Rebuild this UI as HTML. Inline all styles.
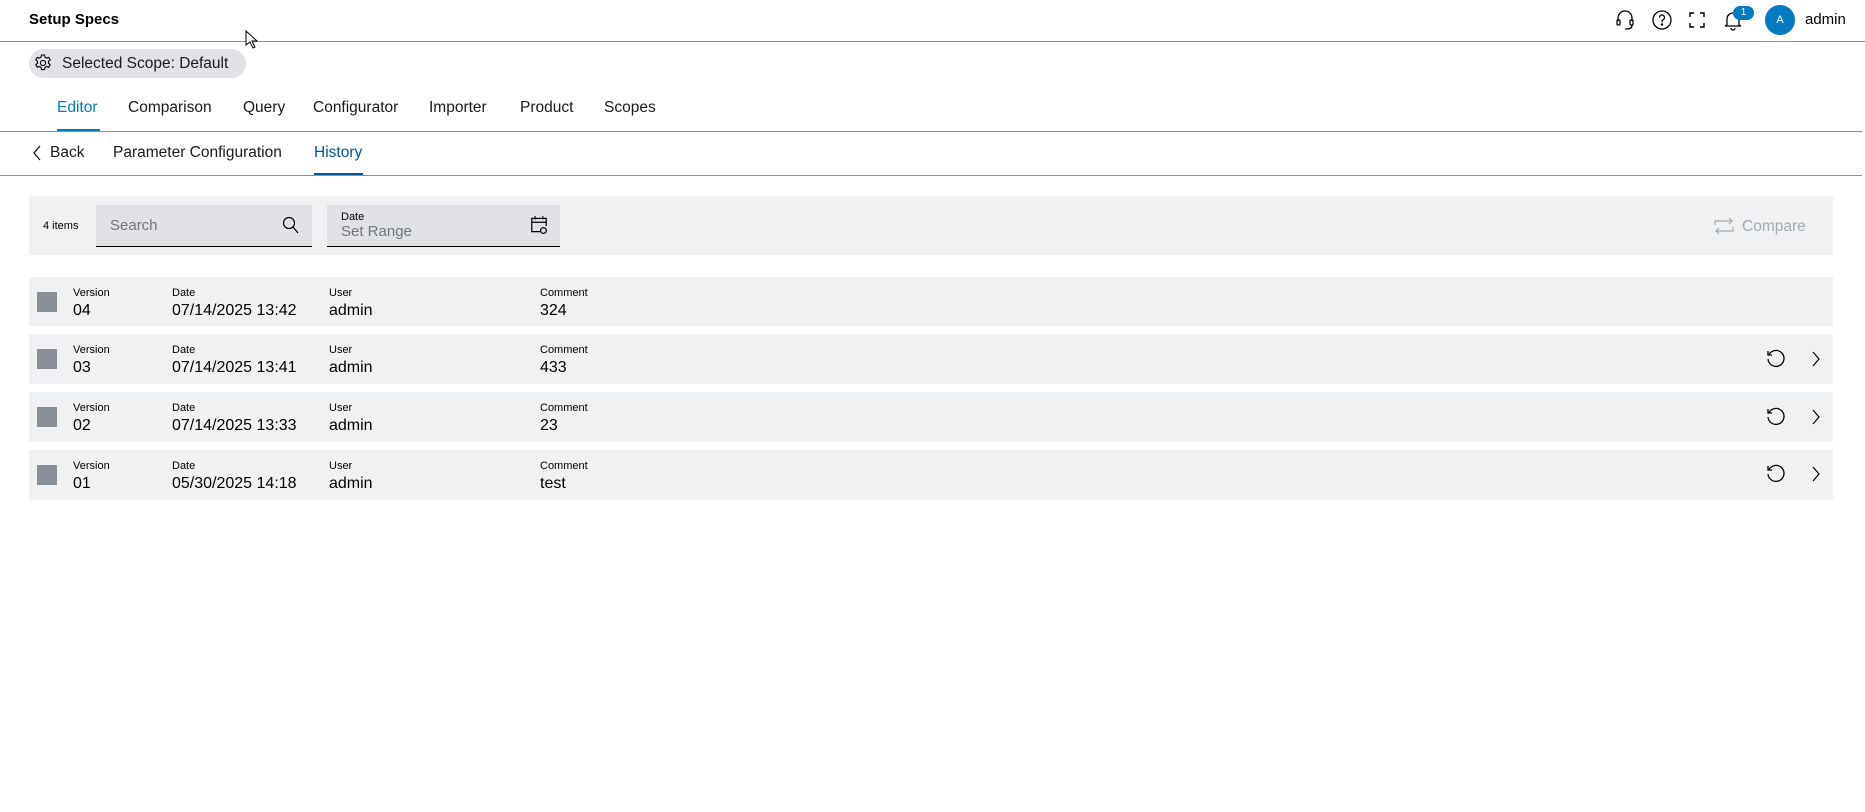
<!DOCTYPE html>
<html><head><meta charset="utf-8"><style>
*{margin:0;padding:0;box-sizing:border-box}
body{width:1865px;height:812px;background:#fff;font-family:"Liberation Sans",sans-serif;color:#000;position:relative;overflow:hidden}
.a{position:absolute;white-space:nowrap}
.line{position:absolute;left:0;height:1px;background:#8a9097}
.tab{position:absolute;top:99px;font-size:15.5px;color:#1a1a1a;white-space:nowrap}
.sub{position:absolute;top:144px;font-size:15.5px;color:#1a1a1a;white-space:nowrap}
.row{position:absolute;left:29px;width:1804px;height:50px;background:#eff1f2}
.cb{position:absolute;left:8px;top:15px;width:20px;height:20px;background:#8a9097}
.lab{position:absolute;top:10px;font-size:11px;color:#000;white-space:nowrap}
.val{position:absolute;top:25px;font-size:16px;color:#000;white-space:nowrap}
svg{position:absolute}
</style></head><body>
<div class="a" style="left:29px;top:11px;font-size:15px;font-weight:bold">Setup Specs</div>
<svg style="left:1614px;top:9px" width="22" height="22" viewBox="0 0 22 22" fill="none" stroke="#000" stroke-width="1.3"><path d="M4 12V9a7 7 0 0 1 14 0v3"/><rect x="3" y="11" width="3" height="5" rx="1"/><rect x="16" y="11" width="3" height="5" rx="1"/><path d="M18 16q0 4-5 4h-2"/></svg>
<svg style="left:1651px;top:9px" width="22" height="22" viewBox="0 0 22 22" fill="none" stroke="#000" stroke-width="1.3"><circle cx="11" cy="11" r="9"/><path d="M8.5 8.5a2.5 2.5 0 1 1 3.5 2.3c-.8.4-1 1-1 1.7v.8"/><circle cx="11" cy="15.5" r=".6" fill="#000"/></svg>
<svg style="left:1687px;top:10px" width="20" height="20" viewBox="0 0 20 20" fill="none" stroke="#000" stroke-width="1.4"><path d="M3 7V3h4M13 3h4v4M17 13v4h-4M7 17H3v-4"/></svg>
<svg style="left:1722px;top:9px" width="22" height="22" viewBox="0 0 22 22" fill="none" stroke="#000" stroke-width="1.3"><path d="M5 16V10a6 6 0 0 1 12 0v6l2 1H3z"/><path d="M9 19a2 2 0 0 0 4 0"/></svg>
<div class="a" style="left:1733px;top:6px;width:21px;height:14px;border-radius:7px;background:#007bc0;color:#fff;font-size:10px;text-align:center;line-height:14px">1</div>
<div class="a" style="left:1765px;top:5px;width:30px;height:30px;border-radius:50%;background:#007bc0;color:#fff;font-size:11px;text-align:center;line-height:30px">A</div>
<div class="a" style="left:1805px;top:11px;font-size:15px">admin</div>
<div class="line" style="top:41px;width:1865px"></div>
<div class="a" style="left:29px;top:49px;width:217px;height:29px;border-radius:15px;background:#e0e2e5"></div>
<svg style="left:33px;top:53px" width="20" height="20" viewBox="0 0 20 20" fill="none" stroke="#000" stroke-width="1.1"><path d="M8.5 2h3l.5 2.2 1.6.9 2.1-.8 1.5 2.6-1.7 1.5v1.8l1.7 1.5-1.5 2.6-2.1-.8-1.6.9-.5 2.2h-3l-.5-2.2-1.6-.9-2.1.8-1.5-2.6 1.7-1.5V8.4L2.8 6.9l1.5-2.6 2.1.8L8 4.2z"/><circle cx="10" cy="10" r="2.6"/></svg>
<div class="a" style="left:62px;top:55px;font-size:15.5px;color:#1a1a1a">Selected Scope: Default</div>
<div class="tab" style="left:57px;color:#007bc0">Editor</div>
<div class="a" style="left:57px;top:129px;width:43px;height:2px;background:#007bc0"></div>
<div class="tab" style="left:128px">Comparison</div>
<div class="tab" style="left:243px">Query</div>
<div class="tab" style="left:313px">Configurator</div>
<div class="tab" style="left:429px">Importer</div>
<div class="tab" style="left:520px">Product</div>
<div class="tab" style="left:604px">Scopes</div>
<div class="line" style="top:131px;width:1862px"></div>
<svg style="left:32px;top:145px" width="10" height="16" viewBox="0 0 10 16" fill="none" stroke="#000" stroke-width="1.2"><path d="M8 1L2 8l6 7"/></svg>
<div class="sub" style="left:50px">Back</div>
<div class="sub" style="left:113px">Parameter Configuration</div>
<div class="sub" style="left:314px;color:#005691">History</div>
<div class="a" style="left:314px;top:173px;width:49px;height:2px;background:#005691"></div>
<div class="line" style="top:175px;width:1862px"></div>
<div class="a" style="left:29px;top:196px;width:1804px;height:59px;background:#eff1f2"></div>
<div class="a" style="left:43px;top:220px;font-size:11px">4 items</div>
<div class="a" style="left:96px;top:205px;width:216px;height:42px;background:#e0e2e5;border-bottom:1px solid #000"></div>
<div class="a" style="left:110px;top:217px;font-size:15px;color:#71767c">Search</div>
<svg style="left:282px;top:216px" width="18" height="20" viewBox="0 0 18 20" fill="none" stroke="#000" stroke-width="1.2"><circle cx="7" cy="7" r="5.5"/><path d="M11 11l5 6"/></svg>
<div class="a" style="left:327px;top:205px;width:233px;height:42px;background:#e0e2e5;border-bottom:1px solid #000"></div>
<div class="a" style="left:341px;top:211px;font-size:11px">Date</div>
<div class="a" style="left:341px;top:223px;font-size:15px;color:#71767c">Set Range</div>
<svg style="left:530px;top:215px" width="18" height="20" viewBox="0 0 16 18" fill="none" stroke="#000" stroke-width="1.1"><path d="M9 15H1.5V3h13v7"/><path d="M1.5 6.5h13M4.5 1v3M11.5 1v3"/><circle cx="12" cy="14" r="2.6"/></svg>
<svg style="left:1713px;top:217px" width="22" height="18" viewBox="0 0 20 18" fill="none" stroke="#a4abb3" stroke-width="1.2"><path d="M1 8V4h17M15 1l3 3-3 3M19 10v4H2M5 17l-3-3 3-3"/></svg>
<div class="a" style="left:1742px;top:218px;font-size:15.5px;color:#a4abb3">Compare</div>
<div class="row" style="top:277px;height:49px">
 <div class="cb"></div>
 <div class="lab" style="left:44px">Version</div><div class="val" style="left:44px">04</div>
 <div class="lab" style="left:143px">Date</div><div class="val" style="left:143px">07/14/2025 13:42</div>
 <div class="lab" style="left:300px">User</div><div class="val" style="left:300px">admin</div>
 <div class="lab" style="left:511px">Comment</div><div class="val" style="left:511px">324</div>
</div>
<div class="row" style="top:334px">
 <div class="cb"></div>
 <div class="lab" style="left:44px">Version</div><div class="val" style="left:44px">03</div>
 <div class="lab" style="left:143px">Date</div><div class="val" style="left:143px">07/14/2025 13:41</div>
 <div class="lab" style="left:300px">User</div><div class="val" style="left:300px">admin</div>
 <div class="lab" style="left:511px">Comment</div><div class="val" style="left:511px">433</div>
</div>
<div class="row" style="top:392px">
 <div class="cb"></div>
 <div class="lab" style="left:44px">Version</div><div class="val" style="left:44px">02</div>
 <div class="lab" style="left:143px">Date</div><div class="val" style="left:143px">07/14/2025 13:33</div>
 <div class="lab" style="left:300px">User</div><div class="val" style="left:300px">admin</div>
 <div class="lab" style="left:511px">Comment</div><div class="val" style="left:511px">23</div>
</div>
<div class="row" style="top:450px">
 <div class="cb"></div>
 <div class="lab" style="left:44px">Version</div><div class="val" style="left:44px">01</div>
 <div class="lab" style="left:143px">Date</div><div class="val" style="left:143px">05/30/2025 14:18</div>
 <div class="lab" style="left:300px">User</div><div class="val" style="left:300px">admin</div>
 <div class="lab" style="left:511px">Comment</div><div class="val" style="left:511px">test</div>
</div>
<svg style="left:1765px;top:348px" width="22" height="22" viewBox="0 0 22 22" fill="none" stroke="#000" stroke-width="1.3"><path d="M4 6.5A8 8 0 1 1 3 11"/><path d="M3 3v4h4"/></svg>
<svg style="left:1810px;top:350px" width="12" height="18" viewBox="0 0 12 18" fill="none" stroke="#000" stroke-width="1.2"><path d="M3 2l6 7-6 7"/></svg>
<svg style="left:1765px;top:406px" width="22" height="22" viewBox="0 0 22 22" fill="none" stroke="#000" stroke-width="1.3"><path d="M4 6.5A8 8 0 1 1 3 11"/><path d="M3 3v4h4"/></svg>
<svg style="left:1810px;top:408px" width="12" height="18" viewBox="0 0 12 18" fill="none" stroke="#000" stroke-width="1.2"><path d="M3 2l6 7-6 7"/></svg>
<svg style="left:1765px;top:463px" width="22" height="22" viewBox="0 0 22 22" fill="none" stroke="#000" stroke-width="1.3"><path d="M4 6.5A8 8 0 1 1 3 11"/><path d="M3 3v4h4"/></svg>
<svg style="left:1810px;top:465px" width="12" height="18" viewBox="0 0 12 18" fill="none" stroke="#000" stroke-width="1.2"><path d="M3 2l6 7-6 7"/></svg>
<svg style="left:245px;top:30px" width="14" height="20" viewBox="0 0 14 20" fill="#fff" stroke="#000" stroke-width="1"><path d="M1 1v14l4-3 3 6 2-1-3-6h5z"/></svg>
</body></html>
